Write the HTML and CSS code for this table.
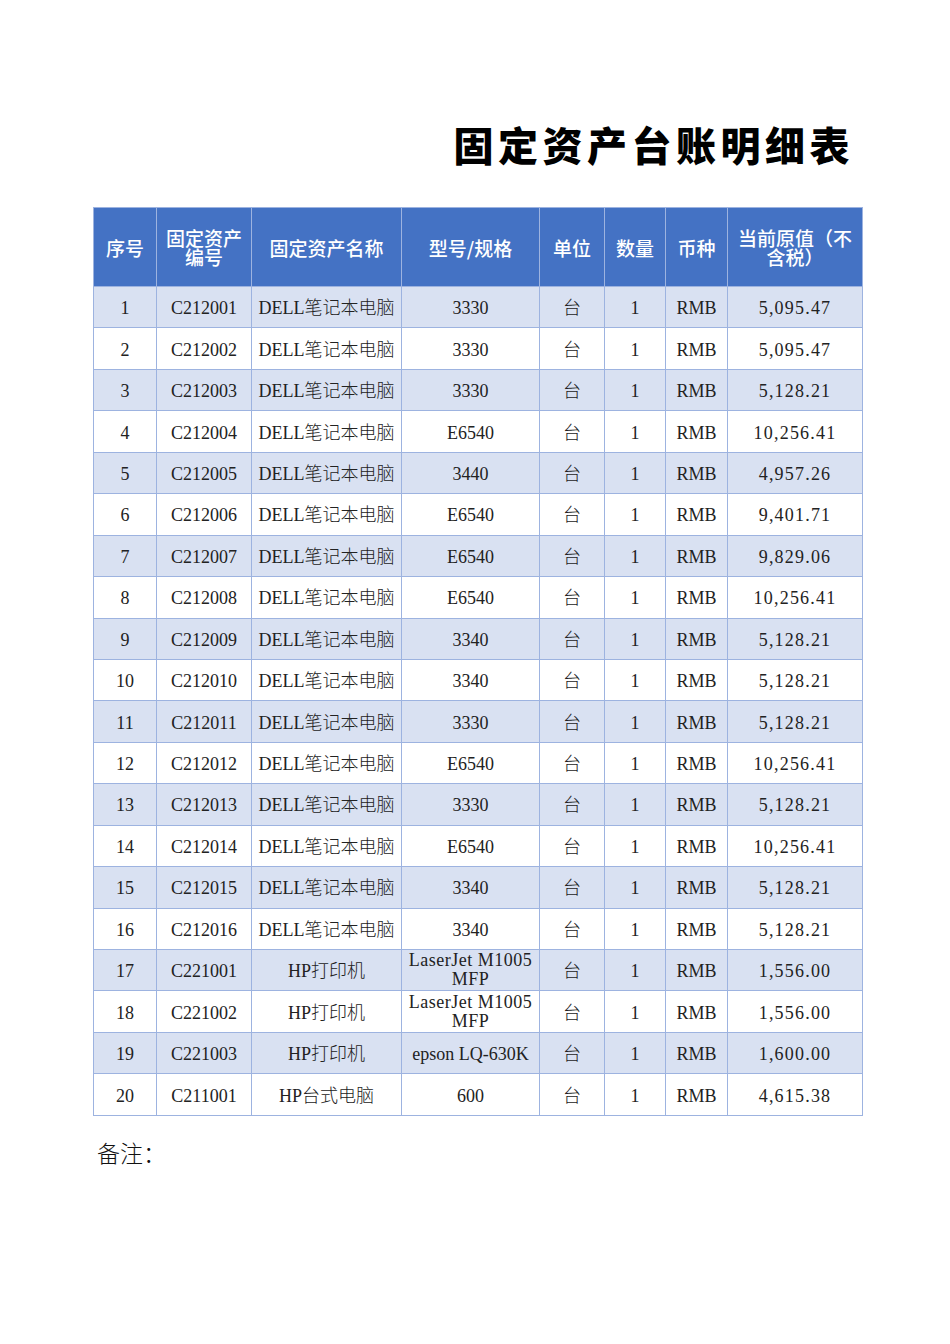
FILE: index.html
```html
<!DOCTYPE html>
<html lang="zh-CN">
<head>
<meta charset="utf-8">
<title>固定资产台账明细表</title>
<link rel="stylesheet" href="styles.css">
</head>
<body>
<div class="page">
  <h1 class="title">固定资产台账明细表</h1>
  <table class="ledger">
    <colgroup>
      <col class="c1"><col class="c2"><col class="c3"><col class="c4">
      <col class="c5"><col class="c6"><col class="c7"><col class="c8">
    </colgroup>
    <thead>
      <tr>
        <th>序号</th><th>固定资产编号</th><th>固定资产名称</th><th>型号/规格</th>
        <th>单位</th><th>数量</th><th>币种</th><th>当前原值（不含税）</th>
      </tr>
    </thead>
    <tbody>
      <tr><td>1</td><td>C212001</td><td>DELL笔记本电脑</td><td>3330</td><td>台</td><td>1</td><td>RMB</td><td>5,095.47</td></tr>
      <tr><td>2</td><td>C212002</td><td>DELL笔记本电脑</td><td>3330</td><td>台</td><td>1</td><td>RMB</td><td>5,095.47</td></tr>
      <tr><td>3</td><td>C212003</td><td>DELL笔记本电脑</td><td>3330</td><td>台</td><td>1</td><td>RMB</td><td>5,128.21</td></tr>
      <tr><td>4</td><td>C212004</td><td>DELL笔记本电脑</td><td>E6540</td><td>台</td><td>1</td><td>RMB</td><td>10,256.41</td></tr>
      <tr><td>5</td><td>C212005</td><td>DELL笔记本电脑</td><td>3440</td><td>台</td><td>1</td><td>RMB</td><td>4,957.26</td></tr>
      <tr><td>6</td><td>C212006</td><td>DELL笔记本电脑</td><td>E6540</td><td>台</td><td>1</td><td>RMB</td><td>9,401.71</td></tr>
      <tr><td>7</td><td>C212007</td><td>DELL笔记本电脑</td><td>E6540</td><td>台</td><td>1</td><td>RMB</td><td>9,829.06</td></tr>
      <tr><td>8</td><td>C212008</td><td>DELL笔记本电脑</td><td>E6540</td><td>台</td><td>1</td><td>RMB</td><td>10,256.41</td></tr>
      <tr><td>9</td><td>C212009</td><td>DELL笔记本电脑</td><td>3340</td><td>台</td><td>1</td><td>RMB</td><td>5,128.21</td></tr>
      <tr><td>10</td><td>C212010</td><td>DELL笔记本电脑</td><td>3340</td><td>台</td><td>1</td><td>RMB</td><td>5,128.21</td></tr>
      <tr><td>11</td><td>C212011</td><td>DELL笔记本电脑</td><td>3330</td><td>台</td><td>1</td><td>RMB</td><td>5,128.21</td></tr>
      <tr><td>12</td><td>C212012</td><td>DELL笔记本电脑</td><td>E6540</td><td>台</td><td>1</td><td>RMB</td><td>10,256.41</td></tr>
      <tr><td>13</td><td>C212013</td><td>DELL笔记本电脑</td><td>3330</td><td>台</td><td>1</td><td>RMB</td><td>5,128.21</td></tr>
      <tr><td>14</td><td>C212014</td><td>DELL笔记本电脑</td><td>E6540</td><td>台</td><td>1</td><td>RMB</td><td>10,256.41</td></tr>
      <tr><td>15</td><td>C212015</td><td>DELL笔记本电脑</td><td>3340</td><td>台</td><td>1</td><td>RMB</td><td>5,128.21</td></tr>
      <tr><td>16</td><td>C212016</td><td>DELL笔记本电脑</td><td>3340</td><td>台</td><td>1</td><td>RMB</td><td>5,128.21</td></tr>
      <tr><td>17</td><td>C221001</td><td>HP打印机</td><td class="model">LaserJet M1005<br>MFP</td><td>台</td><td>1</td><td>RMB</td><td>1,556.00</td></tr>
      <tr><td>18</td><td>C221002</td><td>HP打印机</td><td class="model">LaserJet M1005<br>MFP</td><td>台</td><td>1</td><td>RMB</td><td>1,556.00</td></tr>
      <tr><td>19</td><td>C221003</td><td>HP打印机</td><td>epson LQ-630K</td><td>台</td><td>1</td><td>RMB</td><td>1,600.00</td></tr>
      <tr><td>20</td><td>C211001</td><td>HP台式电脑</td><td>600</td><td>台</td><td>1</td><td>RMB</td><td>4,615.38</td></tr>
    </tbody>
  </table>
  <p class="remark">备注：</p>
</div>
</body>
</html>
```

FILE: styles.css
```css
html, body {
  margin: 0;
  padding: 0;
  background: #ffffff;
}

.page {
  width: 769px;
  padding: 121px 0 0 93px;
}

.title {
  margin: 0 0 40px 0;
  padding-right: 8px;
  height: 46px;
  line-height: 46px;
  text-align: right;
  font-family: "Noto Sans CJK SC", sans-serif;
  font-weight: 900;
  font-size: 40px;
  letter-spacing: 4.5px;
  color: #000000;
}

.ledger {
  width: 769px;
  border-collapse: collapse;
  table-layout: fixed;
  font-family: "Liberation Serif", "Noto Sans CJK SC", serif;
  font-size: 18px;
  color: #222222;
}

.c1 { width: 63px; }
.c2 { width: 95px; }
.c3 { width: 150px; }
.c4 { width: 138px; }
.c5 { width: 65px; }
.c6 { width: 61px; }
.c7 { width: 62px; }
.c8 { width: 135px; }

.ledger th,
.ledger td {
  border: 1px solid #9db3e0;
  text-align: center;
  vertical-align: middle;
  padding: 0 4px;
  overflow: hidden;
  white-space: normal;
}

.ledger th {
  height: 78px;
  background: #4472c4;
  color: #ffffff;
  font-family: "Noto Sans CJK SC", sans-serif;
  font-weight: 500;
  font-size: 19px;
  line-height: 19px;
}

.ledger td {
  height: 38.45px;
  padding-top: 2px;
  padding-bottom: 0;
  line-height: 20px;
  font-weight: 300;
}

.ledger td:nth-child(8) {
  letter-spacing: 1.2px;
}

.ledger tbody tr:nth-child(odd) td {
  background: #d9e1f2;
}

.ledger td.model {
  line-height: 19px;
  padding: 0 1px;
  height: 40.45px;
  letter-spacing: 0.5px;
}

.remark {
  margin: 20px 0 0 4px;
  font-family: "Noto Sans CJK SC", sans-serif;
  font-weight: 300;
  font-size: 23px;
  line-height: 32px;
  color: #111111;
}
```
